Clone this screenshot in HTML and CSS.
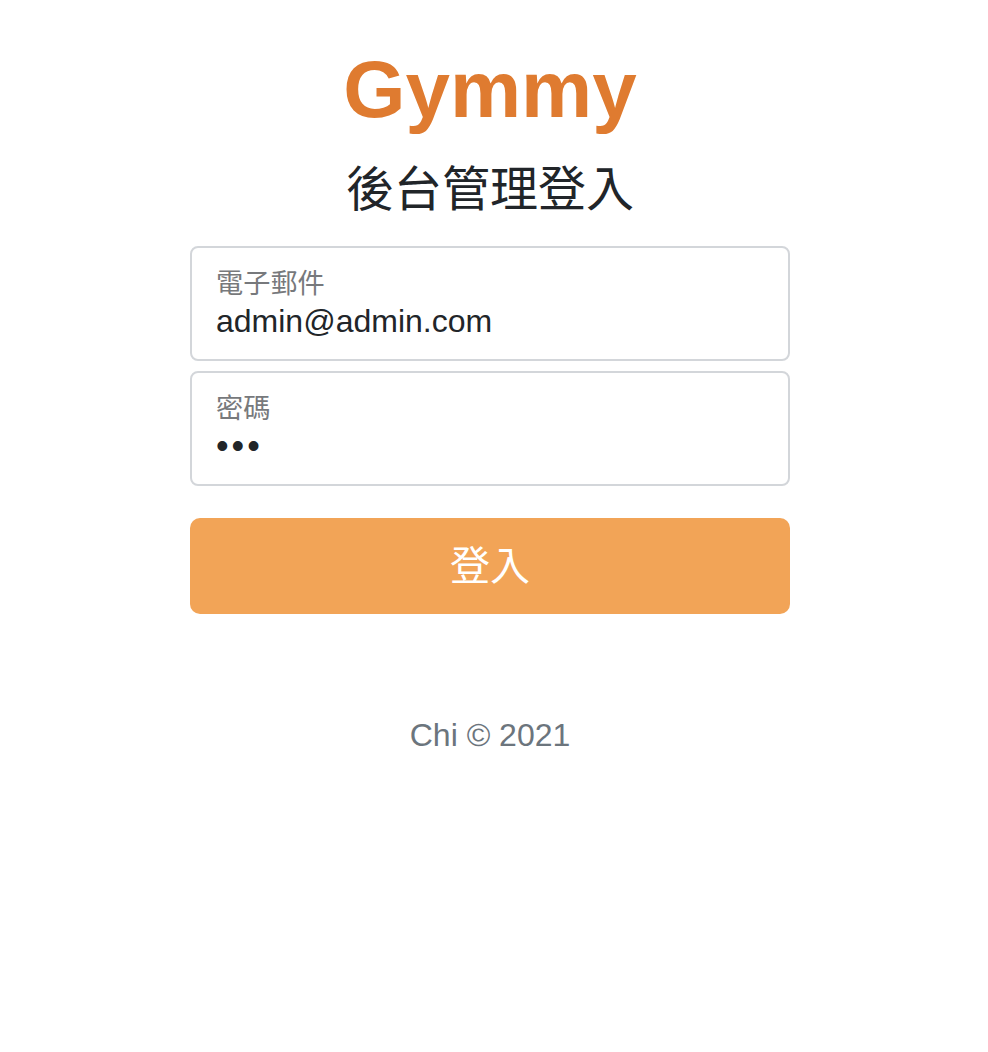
FILE: index.html
```html
<!DOCTYPE html>
<html lang="zh-Hant">
<head>
<meta charset="utf-8">
<title>Gymmy 後台管理登入</title>
<link rel="stylesheet" href="styles.css">
</head>
<body>
<main class="signin">
  <h1 class="brand">Gymmy</h1>
  <h2 class="title">後台管理登入</h2>
  <form class="form">
    <div class="field">
      <div class="field-label">電子郵件</div>
      <div class="field-value">admin@admin.com</div>
    </div>
    <div class="field field-second">
      <div class="field-label">密碼</div>
      <div class="field-value"><span class="dots">•••</span></div>
    </div>
    <button class="btn" type="button">登入</button>
  </form>
  <p class="footer">Chi © 2021</p>
</main>
</body>
</html>
```
FILE: styles.css
```css
html, body {
  margin: 0;
  padding: 0;
  background: #ffffff;
}
body {
  font-family: "Liberation Sans", "Noto Sans CJK TC", sans-serif;
  color: #212529;
}
.signin {
  width: 600px;
  margin-left: 190px;
  padding-top: 42px;
  text-align: center;
}
.brand {
  margin: 0;
  font-size: 80px;
  line-height: 96px;
  font-weight: 700;
  color: #df7b30;
}
.title {
  margin: 18px 0 0;
  font-family: "Noto Sans CJK TC", sans-serif;
  font-size: 48px;
  line-height: 58px;
  font-weight: 400;
  color: #212529;
}
.form {
  margin-top: 32px;
  text-align: left;
}
.field {
  box-sizing: border-box;
  height: 115px;
  border: 2px solid #d3d6da;
  border-radius: 8px;
  padding: 16px 24px 0;
}
.field-second {
  margin-top: 10px;
}
.field-label {
  font-family: "Noto Sans CJK TC", sans-serif;
  font-size: 27.2px;
  line-height: 34px;
  color: #77797c;
}
.field-value {
  margin-top: 4px;
  height: 38px;
  font-size: 32px;
  line-height: 38px;
  color: #212529;
}
.dots {
  font-size: 36px;
  letter-spacing: 3px;
}
.btn {
  display: flex;
  align-items: center;
  justify-content: center;
  box-sizing: border-box;
  width: 100%;
  height: 96px;
  margin-top: 32px;
  border: 0;
  border-radius: 10px;
  background: #f2a457;
  color: #ffffff;
  font-family: "Noto Sans CJK TC", sans-serif;
  font-size: 40px;
  line-height: 60px;
  padding: 0 0 6px;
}
.footer {
  margin: 97px 0 0;
  font-size: 32px;
  line-height: 48px;
  color: #6c757d;
}
```
